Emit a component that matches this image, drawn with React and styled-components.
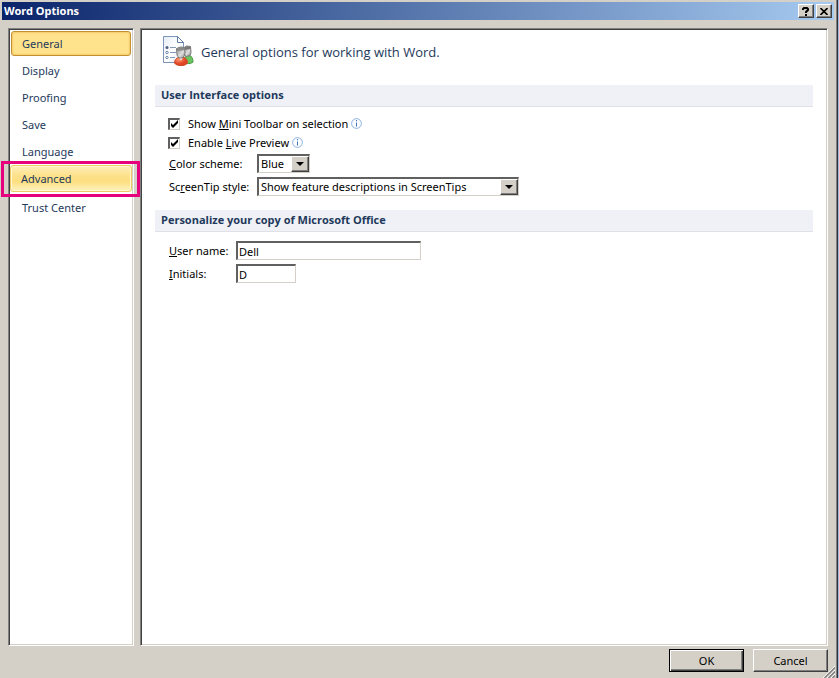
import styled, { createGlobalStyle, css } from "styled-components"

const GlobalStyle = createGlobalStyle`
  * {
    box-sizing: border-box;
  }

  body {
    margin: 0;
    background: #d4d0c8;
    color: #000;
    font-family: "Noto Sans", "Open Sans", sans-serif;
    font-size: 11px;
    line-height: 15px;
  }

  button,
  input,
  select {
    font: inherit;
    color: inherit;
  }
`

const sunken = css`
  border: 1px solid;
  border-color: #808080 #fff #fff #808080;
  box-shadow: inset 1px 1px #404040, inset -1px -1px #d4d0c8;
`

const sunkenField = css`
  border: 2px solid;
  border-color: #606060 #d4d0c8 #d4d0c8 #606060;
  border-right-width: 1px;
  border-bottom-width: 1px;
  border-radius: 0;
  background: #fff;
`

const raised = css`
  border: 1px solid;
  border-color: #fff #404040 #404040 #fff;
  box-shadow: inset -1px -1px #808080;
  border-radius: 0;
  background: #d4d0c8;
`

const Dialog = styled.div`
  position: relative;
  display: flex;
  flex-direction: column;
  min-height: 100vh;
  padding: 2px 3px 6px 2px;
  border-right: 1px solid #9dbbe0;
  box-shadow: inset -1px 0 #303038, inset -2px 0 #808080;
  background: #d4d0c8;
`

const TitleBar = styled.header`
  display: flex;
  align-items: center;
  gap: 2px;
  height: 18px;
  margin-right: 1px;
  padding: 0 2px;
  background: linear-gradient(to right, #0a246a, #a6caf0);
`

const Title = styled.h1`
  flex: 1;
  margin: 0;
  color: #fff;
  font-size: 11px;
  line-height: 18px;
`

const CaptionButton = styled.button`
  ${raised}
  display: flex;
  align-items: center;
  justify-content: center;
  width: 16px;
  height: 14px;
  padding: 0;
`

const Body = styled.div`
  flex: 1;
  display: flex;
  gap: 6px;
  padding: 8px 7px 0 6px;
`

const Sidebar = styled.nav`
  ${sunken}
  display: flex;
  flex-direction: column;
  gap: 2px;
  width: 126px;
  padding: 2px;
  background: #fff;
`

const NavItem = styled.button`
  position: relative;
  flex: none;
  height: 25px;
  padding: 0 10px;
  border: 1px solid transparent;
  border-radius: 3px;
  background: transparent;
  color: #1e395b;
  text-align: left;

  ${(props) =>
    props.$state === "selected" &&
    css`
      border-color: #c2902f;
      background: #ffe38c;
      box-shadow: inset 0 0 2px 1px #f5ca6a;
    `}

  ${(props) =>
    props.$state === "hover" &&
    css`
      height: 27px;
      margin: -1px -1px 1px;
      border-color: #eccb62;
      background: linear-gradient(#fdeeb8, #fde18a 40%, #fddf80 62%, #fff3bf);
      box-shadow: inset 0 0 0 1px #fff6d5;
    `}
`

const Callout = styled.span`
  position: absolute;
  inset: -5px -9px -6px -10px;
  z-index: 1;
  border: 3px solid #e6007e;
  pointer-events: none;
`

const Content = styled.main`
  ${sunken}
  flex: 1;
  padding: 4px 14px;
  background: #fff;
`

const Intro = styled.div`
  display: flex;
  align-items: center;
  gap: 6px;
  height: 37px;
  padding-left: 7px;
  color: #1e395b;
  font-family: "Open Sans", sans-serif;
  font-size: 13px;
  line-height: 18px;
`

const SectionTitle = styled.h2`
  height: 22px;
  margin: ${(props) => (props.$first ? "15px" : "14px")} 0 0;
  padding: 0 6px;
  border-bottom: 1px solid #dfe1e6;
  background: #eff1f6;
  color: #1e395b;
  font-family: "Open Sans", sans-serif;
  font-size: 11px;
  font-weight: 700;
  line-height: 20px;
`

const Options = styled.div`
  display: flex;
  flex-direction: column;
  gap: 4px;
  padding: 9px 13px 0;
`

const CheckRow = styled.div`
  display: flex;
  align-items: center;
  height: 15px;

  label {
    padding: 0 3px 0 8px;
  }
`

const Check = styled.input`
  ${sunkenField}
  appearance: none;
  width: 12px;
  height: 12px;
  margin: 0;

  &:checked {
    background: #fff
      url("data:image/svg+xml,%3Csvg xmlns='http://www.w3.org/2000/svg' viewBox='0 0 9 9'%3E%3Cpath d='M1 3v3l2 2 5-5V0L3 5z'/%3E%3C/svg%3E")
      center / 9px 9px no-repeat;
  }
`

const InfoIcon = styled.svg`
  width: 11px;
  height: 11px;
`

const Field = styled.div`
  display: flex;
  align-items: center;

  > label {
    width: ${(props) => props.$label};
    padding-left: 1px;
  }
`

const SelectBox = styled.div`
  ${sunkenField}
  position: relative;
  width: ${(props) => props.$width};
  height: 19px;

  select {
    display: block;
    width: 100%;
    height: 16px;
    padding: 0 18px 0 2px;
    border: 0;
    appearance: none;
    background: transparent;
    line-height: 16px;
  }
`

const Arrow = styled.span`
  ${raised}
  position: absolute;
  top: 0;
  right: 0;
  display: flex;
  align-items: center;
  justify-content: center;
  width: 18px;
  height: 16px;
  pointer-events: none;
`

const TextInput = styled.input`
  ${sunkenField}
  width: ${(props) => props.$width};
  height: 19px;
  padding: 0 1px;
  line-height: 15px;
`

const Footer = styled.footer`
  display: flex;
  justify-content: flex-end;
  gap: 9px;
  padding: 3px 7px 0;
`

const PushButton = styled.button`
  ${raised}
  width: 75px;
  height: 23px;
  padding: 0;

  ${(props) =>
    props.$default &&
    css`
      border-color: #000;
      box-shadow: inset 1px 1px #fff, inset -1px -1px #404040, inset -2px -2px #808080;
    `}
`

const Grip = styled.svg`
  position: absolute;
  right: 3px;
  bottom: 0;
  width: 12px;
  height: 12px;
`

function Info() {
  return (
    <InfoIcon viewBox="0 0 11 11" fill="none" aria-hidden="true">
      <circle cx="5.5" cy="5.5" r="4.9" fill="#fafcff" stroke="#8fb2e0" />
      <path d="M5 2h1v1.3H5zM5 4.5h1v4H5z" fill="#3f74bd" />
    </InfoIcon>
  )
}

function OptionsIcon() {
  return (
    <svg width="33" height="33" viewBox="0 0 33 33" aria-hidden="true">
      <defs>
        <linearGradient id="paper" x2="1" y2="1">
          <stop offset="0" stopColor="#e6edf7" />
          <stop offset=".5" stopColor="#fff" />
          <stop offset="1" stopColor="#dce5f1" />
        </linearGradient>
        <radialGradient id="red" cx=".35" cy=".3">
          <stop offset="0" stopColor="#ff9a70" />
          <stop offset="1" stopColor="#df4425" />
        </radialGradient>
        <linearGradient id="head" x2="1" y2="1">
          <stop offset="0" stopColor="#8a8a8a" />
          <stop offset=".6" stopColor="#dedede" />
          <stop offset="1" stopColor="#8a8a8a" />
        </linearGradient>
      </defs>
      <path d="M1.5 1.5h14l6 6v20h-20z" fill="url(#paper)" stroke="#7f95b8" />
      <path d="M15.5 1.5v6h6z" fill="#fff" stroke="#5f7ba8" />
      <path d="M8 12.5h6M8 17.5h6M8 22.5h5" stroke="#8498b8" />
      <circle cx="5" cy="12.5" r="1.5" fill="#4c5f80" />
      <circle cx="5" cy="17.5" r="1.2" fill="#fff" stroke="#6f87ae" />
      <circle cx="5" cy="22.5" r="1.2" fill="#fff" stroke="#6f87ae" />
      <path d="M22 27c0-5 2-7 5-7 3 1 4 4 4 7-2 2-6 2-9 1z" fill="#6cc460" stroke="#489a42" />
      <path d="M21.5 13l3-2 4 .5.5 6-1 3-4 1-3-4z" fill="url(#head)" stroke="#777" />
      <path d="M22 13l3-1.500 3.500.5v2l-6 1z" fill="#777" />
      <path d="M12.5 28c0-4 3-6 6.500-6 4 0 6.500 2 6.500 6-2 3.500-11 3.500-13 0z" fill="url(#red)" stroke="#cc4a26" />
      <path d="M17 22.5l2 3 2-3" fill="#fff" />
      <path d="M14.5 13.500l4-1.500 4 .5.5 6-1 3-2 1.500h-3l-2-3z" fill="url(#head)" stroke="#777" />
      <path d="M15 14l4-1.500 3.500.5v2l-7 1z" fill="#888" />
    </svg>
  )
}

function DropDown({ id, width, value }) {
  return (
    <SelectBox $width={width}>
      <select id={id} defaultValue={value}>
        <option>{value}</option>
      </select>
      <Arrow>
        <svg width="8" height="4" viewBox="0 0 8 4">
          <path d="M0 0h8L4 4z" />
        </svg>
      </Arrow>
    </SelectBox>
  )
}

const pages = ["General", "Display", "Proofing", "Save", "Language", "Advanced", "Trust Center"]

const states = { General: "selected", Advanced: "hover" }

export default function App() {
  return (
    <>
      <GlobalStyle />
      <Dialog>
        <TitleBar>
          <Title>Word Options</Title>
          <CaptionButton aria-label="Help">
            <svg width="8" height="9" viewBox="0 0 8 9" fill="none" stroke="#000" strokeWidth="2">
              <path d="M1 3V2l1-1h3l1 1v1L4 5v1M4 7v2" />
            </svg>
          </CaptionButton>
          <CaptionButton aria-label="Close">
            <svg width="8" height="7" viewBox="0 0 8 7" stroke="#000" strokeWidth="1.6">
              <path d="M.5 0l7 7M7.500 0l-7 7" />
            </svg>
          </CaptionButton>
        </TitleBar>
        <Body>
          <Sidebar>
            {pages.map((page) => (
              <NavItem key={page} $state={states[page]}>
                {page}
                {page === "Advanced" && <Callout />}
              </NavItem>
            ))}
          </Sidebar>
          <Content>
            <Intro>
              <OptionsIcon />
              General options for working with Word.
            </Intro>
            <SectionTitle $first>User Interface options</SectionTitle>
            <Options>
              <CheckRow>
                <Check type="checkbox" id="mini-toolbar" defaultChecked />
                <label htmlFor="mini-toolbar">
                  Show <u>M</u>ini Toolbar on selection
                </label>
                <Info />
              </CheckRow>
              <CheckRow>
                <Check type="checkbox" id="live-preview" defaultChecked />
                <label htmlFor="live-preview">
                  Enable <u>L</u>ive Preview
                </label>
                <Info />
              </CheckRow>
              <Field $label="89px">
                <label htmlFor="scheme">
                  <u>C</u>olor scheme:
                </label>
                <DropDown id="scheme" width="53px" value="Blue" />
              </Field>
              <Field $label="89px">
                <label htmlFor="screentip">
                  Sc<u>r</u>eenTip style:
                </label>
                <DropDown id="screentip" width="262px" value="Show feature descriptions in ScreenTips" />
              </Field>
            </Options>
            <SectionTitle>Personalize your copy of Microsoft Office</SectionTitle>
            <Options>
              <Field $label="68px">
                <label htmlFor="user">
                  <u>U</u>ser name:
                </label>
                <TextInput id="user" $width="185px" defaultValue="Dell" />
              </Field>
              <Field $label="68px">
                <label htmlFor="initials">
                  <u>I</u>nitials:
                </label>
                <TextInput id="initials" $width="60px" defaultValue="D" />
              </Field>
            </Options>
          </Content>
        </Body>
        <Footer>
          <PushButton $default>OK</PushButton>
          <PushButton>Cancel</PushButton>
        </Footer>
        <Grip viewBox="0 0 12 12" aria-hidden="true">
          <path d="M0 12L12 0M4 12l8-8M8 12l4-4" stroke="#fff" />
          <path d="M1.5 12L12 1.5M5.5 12L12 5.5M9.5 12L12 9.5" stroke="#808080" strokeWidth="1.5" />
        </Grip>
      </Dialog>
    </>
  )
}
